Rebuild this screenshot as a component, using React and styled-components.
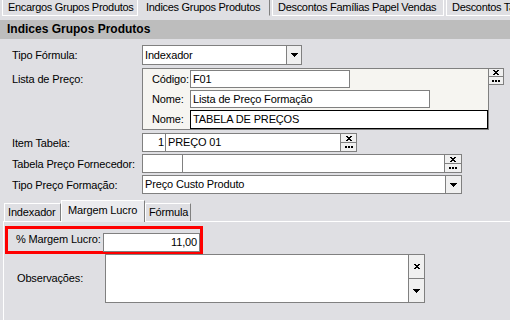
import React from "react";
import styled, { createGlobalStyle } from "styled-components";

const Global = createGlobalStyle`
  html, body { margin: 0; padding: 0; }
  body {
    width: 510px;
    height: 320px;
    overflow: hidden;
    background: #dfdfe3;
    font-family: "Liberation Sans", Arial, sans-serif;
    font-size: 11px;
    letter-spacing: -0.15px;
    color: #000;
  }
  * { box-sizing: border-box; }
`;

const Page = styled.div`
  width: 510px;
  height: 320px;
  overflow: hidden;
`;

const TabBar = styled.div`
  display: flex;
  height: 17px;
  padding-left: 2px;
`;

const TopTab = styled.div`
  width: ${p => p.$w}px;
  flex-shrink: 0;
  height: 16px;
  padding-left: 5px;
  line-height: 15px;
  letter-spacing: -0.3px;
  white-space: nowrap;
  overflow: hidden;
  border: 1px solid ${p => (p.$active ? "transparent" : "#fff")};
  border-top: none;
  border-right-color: ${p => (p.$active ? "#808080" : "#fff")};
  margin-right: 2px;
`;

const Header = styled.div`
  margin-top: 3px;
  height: 19px;
  background: #bdbdbd;
  padding-left: 7px;
  font-weight: bold;
  font-size: 12px;
  letter-spacing: 0;
  line-height: 19px;
`;

const Form = styled.div`
  padding-top: 6px;
`;

const Row = styled.div`
  display: flex;
  align-items: ${p => (p.$top ? "flex-start" : "center")};
  margin-top: ${p => p.$gap || 0}px;
`;

const Label = styled.div`
  width: ${p => p.$w || 142}px;
  flex-shrink: 0;
  padding-left: ${p => (p.$pl === undefined ? 12 : p.$pl)}px;
  line-height: ${p => p.$lh || 18}px;
  margin-top: ${p => p.$mt || 0}px;
  white-space: nowrap;
`;

const Box = styled.div`
  display: flex;
  width: ${p => p.$w}px;
  height: ${p => p.$h || 19}px;
  background: #fff;
  border: 1px solid ${p => (p.$focus ? "#000" : "#808080")};
  flex-shrink: 0;
`;

const Text = styled.div`
  flex: 1;
  padding: 0 2px;
  line-height: ${p => p.$lh || 17}px;
  text-align: ${p => p.$align || "left"};
  white-space: nowrap;
  overflow: hidden;
`;

const Cell = styled.div`
  width: ${p => p.$w}px;
  flex-shrink: 0;
  border-right: 1px solid #808080;
  padding-right: 1px;
  text-align: right;
  line-height: 17px;
`;

const Arrow = styled.div`
  width: ${p => p.$w || 16}px;
  flex-shrink: 0;
  border-left: 1px solid #808080;
  background: #f0f0f0;
  display: flex;
  align-items: center;
  justify-content: center;
`;

const Stack = styled.div`
  display: flex;
  flex-direction: column;
  width: ${p => p.$w}px;
  height: ${p => p.$h}px;
  border: 1px solid #808080;
  border-left: ${p => (p.$noLeft ? "none" : "1px solid #808080")};
  flex-shrink: 0;
  align-self: flex-start;
`;

const Mini = styled.div`
  flex: 1;
  background: #f0f0f0;
  display: flex;
  align-items: center;
  justify-content: center;
  & + & {
    border-top: 1px solid #808080;
  }
`;

const Panel = styled.div`
  width: 347px;
  height: 62px;
  background: #f6f5f1;
  border: 1px solid #808080;
  padding: 1px 0 0 9px;
  flex-shrink: 0;
`;

const SubRow = styled.div`
  display: flex;
  align-items: center;
  height: 18px;
  & + & {
    margin-top: 2px;
  }
`;

const SubLabel = styled.div`
  width: 38px;
  flex-shrink: 0;
`;

const InnerTabs = styled.div`
  display: flex;
  align-items: flex-end;
  height: 21px;
  margin-top: 6px;
  padding-left: 4px;
`;

const InnerTab = styled.div`
  width: ${p => p.$w}px;
  height: ${p => (p.$active ? 22 : 18)}px;
  margin-bottom: ${p => (p.$active ? -1 : 0)}px;
  padding-left: ${p => (p.$active ? 6 : 3)}px;
  line-height: ${p => (p.$active ? 18 : 17)}px;
  background: ${p => (p.$active ? "#ebebee" : "#dfdfe3")};
  border-top: 1px solid #fff;
  border-left: 1px solid #fff;
  border-right: 1px solid #808080;
  position: relative;
  z-index: ${p => (p.$active ? 1 : 0)};
  white-space: nowrap;
`;

const TabPage = styled.div`
  margin-left: 3px;
  border-top: 1px solid #fff;
  border-left: 1px solid #fff;
  height: 99px;
  padding: 4px 0 0 1px;
`;

const Frame = styled.div`
  display: flex;
  width: 198px;
  height: 28px;
  border: 3px solid #ff0000;
  position: relative;
  z-index: 1;
`;

const FrameLabel = styled.div`
  width: 96px;
  padding-left: 8px;
  line-height: 21px;
  white-space: nowrap;
`;

const Value = styled(Box)`
  align-self: flex-end;
  margin-bottom: -1px;
`;

const ObsRow = styled.div`
  display: flex;
`;

const Memo = styled.div`
  width: 304px;
  height: 49px;
  background: #fff;
  border: 1px solid #808080;
`;

const XIcon = () => (
  <svg width="6" height="5" viewBox="0 0 6 5" shapeRendering="crispEdges">
    <rect x="0" y="0" width="2" height="1" fill="#000" />
    <rect x="4" y="0" width="2" height="1" fill="#000" />
    <rect x="1" y="1" width="4" height="1" fill="#000" />
    <rect x="2" y="2" width="2" height="1" fill="#000" />
    <rect x="1" y="3" width="4" height="1" fill="#000" />
    <rect x="0" y="4" width="2" height="1" fill="#000" />
    <rect x="4" y="4" width="2" height="1" fill="#000" />
  </svg>
);

const Dots = () => (
  <svg width="8" height="2" viewBox="0 0 8 2" shapeRendering="crispEdges">
    <rect x="0" y="0" width="2" height="2" fill="#000" />
    <rect x="3" y="0" width="2" height="2" fill="#000" />
    <rect x="6" y="0" width="2" height="2" fill="#000" />
  </svg>
);

const Down = () => (
  <svg width="7" height="4" viewBox="0 0 7 4" shapeRendering="crispEdges">
    <rect x="0" y="0" width="7" height="1" fill="#000" />
    <rect x="1" y="1" width="5" height="1" fill="#000" />
    <rect x="2" y="2" width="3" height="1" fill="#000" />
    <rect x="3" y="3" width="1" height="1" fill="#000" />
  </svg>
);

export default function App() {
  return (
    <Page>
      <Global />
      <TabBar>
        <TopTab $w={136}>Encargos Grupos Produtos</TopTab>
        <TopTab $w={130} $active>Indices Grupos Produtos</TopTab>
        <TopTab $w={172}>Descontos Famílias Papel Vendas</TopTab>
        <TopTab $w={80}>Descontos Tabela</TopTab>
      </TabBar>
      <Header>Indices Grupos Produtos</Header>

      <Form>
        <Row>
          <Label>Tipo Fórmula:</Label>
          <Box $w={160} $h={20}>
            <Text $lh={18}>Indexador</Text>
            <Arrow $w={15}><Down /></Arrow>
          </Box>
        </Row>

        <Row $top $gap={3}>
          <Label $mt={2}>Lista de Preço:</Label>
          <Panel>
            <SubRow>
              <SubLabel>Código:</SubLabel>
              <Box $w={160} $h={18}><Text $lh={16}>F01</Text></Box>
            </SubRow>
            <SubRow>
              <SubLabel>Nome:</SubLabel>
              <Box $w={240} $h={18}><Text $lh={16}>Lista de Preço Formação</Text></Box>
            </SubRow>
            <SubRow>
              <SubLabel>Nome:</SubLabel>
              <Box $w={298} $h={19} $focus><Text $lh={17}>TABELA DE PREÇOS</Text></Box>
            </SubRow>
          </Panel>
          <Stack $w={15} $h={17} $noLeft>
            <Mini><XIcon /></Mini>
            <Mini><Dots /></Mini>
          </Stack>
        </Row>

        <Row $gap={3}>
          <Label>Item Tabela:</Label>
          <Box $w={199}>
            <Cell $w={23}>1</Cell>
            <Text>PREÇO 01</Text>
          </Box>
          <Stack $w={16} $h={19} $noLeft>
            <Mini><XIcon /></Mini>
            <Mini><Dots /></Mini>
          </Stack>
        </Row>

        <Row $gap={2}>
          <Label>Tabela Preço Fornecedor:</Label>
          <Box $w={303}>
            <Cell $w={40}></Cell>
            <Text></Text>
          </Box>
          <Stack $w={17} $h={19} $noLeft>
            <Mini><XIcon /></Mini>
            <Mini><Dots /></Mini>
          </Stack>
        </Row>

        <Row $gap={2}>
          <Label>Tipo Preço Formação:</Label>
          <Box $w={320}>
            <Text>Preço Custo Produto</Text>
            <Arrow $w={16}><Down /></Arrow>
          </Box>
        </Row>
      </Form>

      <InnerTabs>
        <InnerTab $w={57}>Indexador</InnerTab>
        <InnerTab $w={84} $active>Margem Lucro</InnerTab>
        <InnerTab $w={46}>Fórmula</InnerTab>
      </InnerTabs>
      <TabPage>
        <Frame>
          <FrameLabel>% Margem Lucro:</FrameLabel>
          <Value $w={97}>
            <Text $align="right" $lh={17}>11,00</Text>
          </Value>
        </Frame>
        <ObsRow>
          <Label $w={100} $lh={49}>Observações:</Label>
          <Memo />
          <Stack $w={16} $h={49} $noLeft>
            <Mini><XIcon /></Mini>
            <Mini><Down /></Mini>
          </Stack>
        </ObsRow>
      </TabPage>
    </Page>
  );
}
